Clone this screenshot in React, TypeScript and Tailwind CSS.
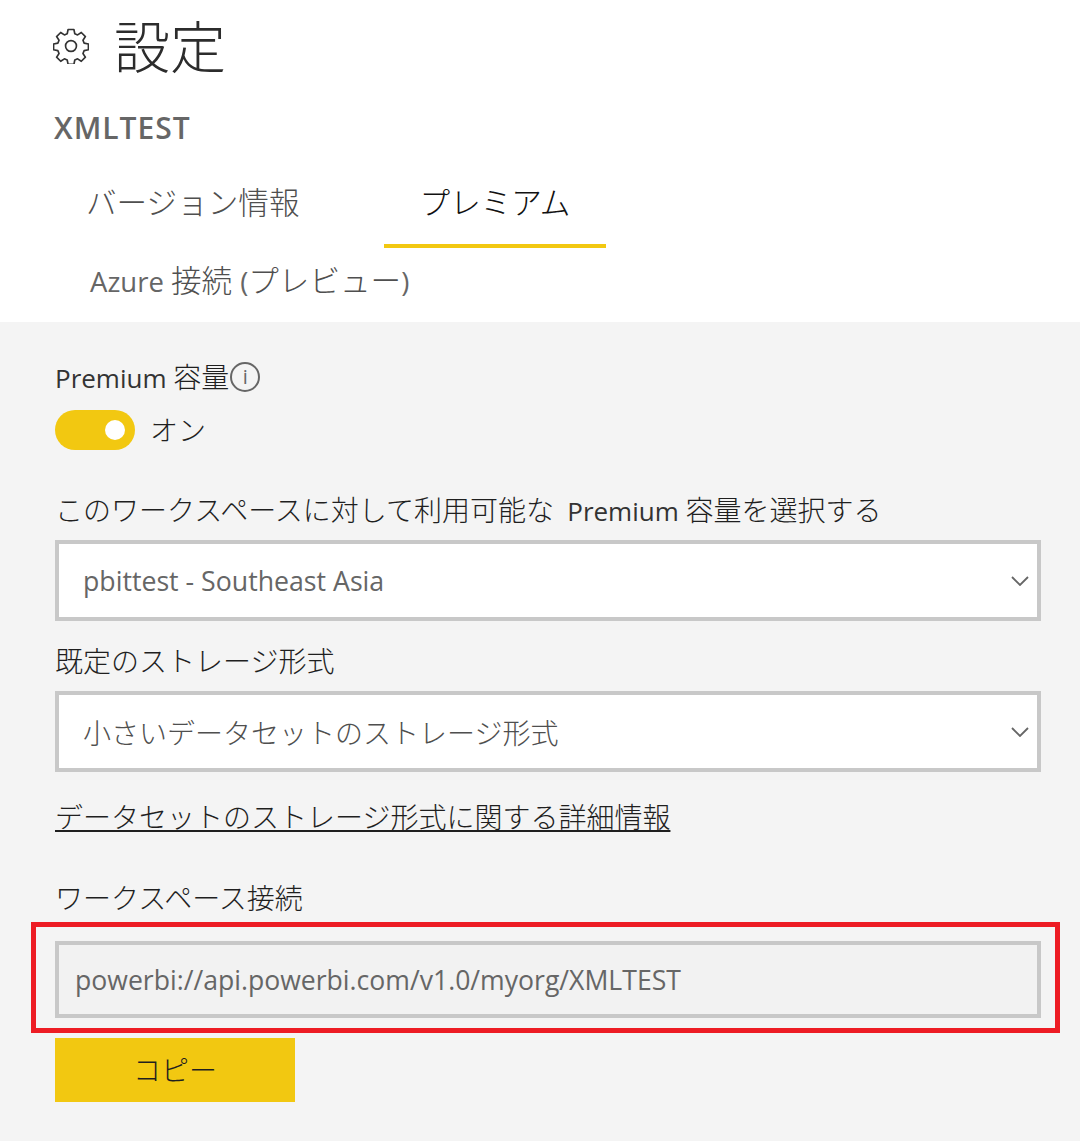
import React from 'react'

const FONT = "font-['Open_Sans','Noto_Sans_CJK_JP',sans-serif]"

function GearIcon() {
  return (
    <svg width="36" height="36" viewBox="0 0 37 37" fill="none" stroke="#333" strokeWidth="1.7" strokeLinejoin="round">
      <path d="M15.5 1.5h6l.9 4.4 2.9 1.2 3.8-2.5 4.2 4.2-2.5 3.8 1.2 2.9 4.4.9v6l-4.4.9-1.2 2.9 2.5 3.8-4.2 4.2-3.8-2.5-2.9 1.2-.9 4.4h-6l-.9-4.4-2.9-1.2-3.8 2.5-4.2-4.2 2.5-3.8-1.2-2.9-4.4-.9v-6l4.4-.9 1.2-2.9-2.5-3.8 4.2-4.2 3.8 2.5 2.9-1.2z" />
      <circle cx="18.5" cy="18.5" r="5.6" />
    </svg>
  )
}

function Chevron() {
  return (
    <svg width="18" height="10" viewBox="0 0 18 10" fill="none" stroke="#666" strokeWidth="1.8" className="absolute right-[8px] top-1/2 -translate-y-1/2">
      <path d="M1 1l8 8 8-8" />
    </svg>
  )
}

function Select({ children, pl }: { children: React.ReactNode; pl: string }) {
  return (
    <div className={`relative flex h-[81px] w-[986px] items-center border-[4px] border-[#c8c8c8] bg-white pt-[2px] text-[28px] text-[#4f4f4f] ${pl}`}>
      {children}
      <Chevron />
    </div>
  )
}

export default function App() {
  return (
    <div className={`h-[1141px] w-[1080px] overflow-hidden bg-[#f4f4f4] font-light ${FONT}`}>
      <div className="h-[322px] bg-white pl-[53px]">
        <div className="flex h-[92px] items-center">
          <GearIcon />
          <h1 className="ml-[25px] text-[56px] leading-none font-light text-[#2c2c2c]">設定</h1>
        </div>
        <div className="mt-[20px] h-[32px] pl-[1px] text-[30px] leading-[32px] font-semibold tracking-[1px] text-[#666]">XMLTEST</div>
        <div className="mt-[26px] flex">
          <div className="h-[78px] w-[331px] pl-[33px] text-[30.6px] leading-[64px] text-[#4f4f4f]">バージョン情報</div>
          <div className="h-[78px] w-[222px] border-b-[4px] border-[#f2c811] text-center text-[30.6px] leading-[64px] text-[#111]">プレミアム</div>
        </div>
        <div className="mt-[12px] pl-[37px] text-[30.6px] leading-[40px] whitespace-pre text-[#4f4f4f]">
          <span className="text-[27.5px] font-normal text-[#666]">Azure </span>接続 <span className="text-[27.5px] font-normal text-[#666]">(</span>プレビュー<span className="text-[27.5px] font-normal text-[#666]">)</span>
        </div>
      </div>

      <div className="relative pt-[37px] pl-[55px] text-[28px] text-[#1f1f1f]">
        <div className="flex h-[36px] items-center leading-[36px]">
          <span className="whitespace-pre"><span className="text-[26px] font-normal text-[#333]">Premium </span>容量</span>
          <span className="ml-[1px] flex h-[30px] w-[30px] items-center justify-center rounded-full border-[2px] border-[#666] text-[20px] leading-none font-normal text-[#666]">i</span>
        </div>
        <div className="mt-[15px] flex items-center">
          <div className="flex h-[40px] w-[80px] items-center justify-end rounded-full bg-[#f2c811] pr-[10px]">
            <div className="h-[20px] w-[20px] rounded-full bg-white" />
          </div>
          <span className="ml-[15px] leading-[40px]">オン</span>
        </div>

        <div className="mt-[40px] h-[40px] leading-[40px] whitespace-pre">このワークスペースに対して利用可能な <span className="ml-[6px] text-[26px] font-normal text-[#333]">Premium </span>容量を選択する</div>
        <div className="mt-[10px]">
          <Select pl="pl-[24px]"><span className="text-[26.7px] font-normal text-[#666]">pbittest - Southeast Asia</span></Select>
        </div>
        <div className="mt-[20px] h-[40px] leading-[40px]">既定のストレージ形式</div>
        <div className="mt-[10px]">
          <Select pl="pl-[24px]">小さいデータセットのストレージ形式</Select>
        </div>
        <div className="mt-[25px] h-[40px] leading-[40px] underline">データセットのストレージ形式に関する詳細情報</div>

        <div className="mt-[41px] h-[40px] leading-[40px]">ワークスペース接続</div>
        <div className="mt-[23px] flex h-[77px] w-[986px] items-center border-[4px] border-[#c8c8c8] bg-[#f2f2f2] pl-[16px] pt-[3px] text-[26.6px] font-normal text-[#666]">
          powerbi://api.powerbi.com/v1.0/myorg/XMLTEST
        </div>
        <div className="mt-[20px] flex h-[64px] w-[240px] items-center justify-center bg-[#f2c811] text-[#1f1f1f]">コピー</div>

        {/* red annotation drawn over the connection field */}
        <div className="absolute top-[600px] left-[31px] h-[111px] w-[1029px] border-[5px] border-[#ed1c24]" />
      </div>
    </div>
  )
}
